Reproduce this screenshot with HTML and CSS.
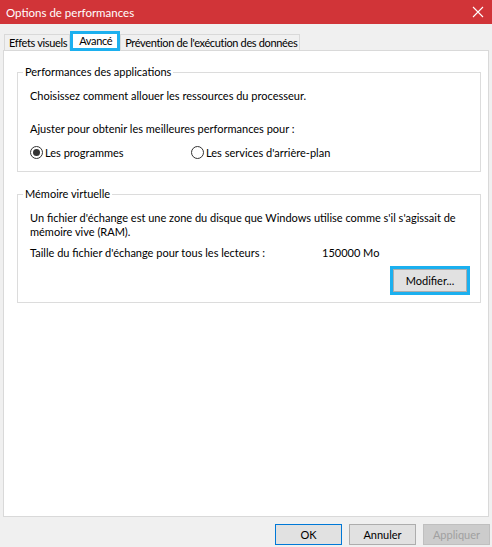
FILE: index.html
```html
<html>
<head>
  <meta name="viewport" content="width=device-width, initial-scale=1">
  <title>Options de performances</title>
  <link rel="stylesheet" href="styles.css">
</head>
<body>
  <div class="window">
    <div class="titlebar">
      <span class="title">Options de performances</span>
      <span class="close">
        <svg width="12" height="12" viewBox="0 0 12 12"><path d="M1 1 L11 11 M11 1 L1 11" stroke="#fff" stroke-width="1.1" fill="none"/></svg>
      </span>
    </div>

    <div class="tabs">
      <div class="tab">Effets visuels</div>
      <div class="tab active highlight">Avancé</div>
      <div class="tab">Prévention de l'exécution des données</div>
    </div>

    <div class="panel">
      <fieldset class="group perf">
        <legend>Performances des applications</legend>
        <p class="line">Choisissez comment allouer les ressources du processeur.</p>
        <p class="line spaced">Ajuster pour obtenir les meilleures performances pour :</p>
        <div class="radios">
          <label class="radio"><span class="dot checked"></span>Les programmes</label>
          <label class="radio"><span class="dot"></span>Les services d'arrière-plan</label>
        </div>
      </fieldset>

      <fieldset class="group mem">
        <legend>Mémoire virtuelle</legend>
        <p class="para">Un fichier d'échange est une zone du disque que Windows utilise comme s'il s'agissait de mémoire vive (RAM).</p>
        <div class="size-row">
          <span class="size-label">Taille du fichier d'échange pour tous les lecteurs :</span>
          <span>150000 Mo</span>
        </div>
        <div class="actions">
          <button class="btn highlight" type="button">Modifier...</button>
        </div>
      </fieldset>
    </div>

    <div class="footer">
      <button class="btn default" type="button">OK</button>
      <button class="btn" type="button">Annuler</button>
      <button class="btn" type="button" disabled>Appliquer</button>
    </div>
  </div>
</body>
</html>
```

FILE: styles.css
```css
body {
  margin: 0;
  background-color: #f0f0f0;
  color: #000;
  font-family: Lato, "Noto Sans", sans-serif;
  font-size: 11px;
}

.window {
  width: 492px;
  height: 547px;
  overflow: hidden;
}

/* barre de titre */
.titlebar {
  height: 24px;
  background-color: #d13438;
  color: #fff;
  display: flex;
  align-items: center;
  justify-content: space-between;
  padding: 0 6px 0 6px;
  font-size: 11.5px;
}

.close {
  display: flex;
  width: 12px;
  height: 12px;
  margin-right: 2px;
}

/* onglets */
.tabs {
  display: flex;
  align-items: flex-end;
  height: 18px;
  margin-top: 8px;
  padding-left: 4px;
  position: relative;
  z-index: 1;
}

.tab {
  height: 15px;
  line-height: 15px;
  padding: 0 2px 0 4px;
  border: 1px solid #d9d9d9;
  border-bottom: none;
  background-color: #f0f0f0;
  white-space: nowrap;
  letter-spacing: -0.35px;
}

.tab.active {
  height: 19px;
  line-height: 17px;
  padding: 0 7px 0 8px;
  margin-bottom: -1px;
  background-color: #fff;
}

.highlight {
  outline: 3px solid #1cb0ef;
  outline-offset: -3px;
}

/* panneau */
.panel {
  margin: 0 3px;
  height: 465px;
  background-color: #fff;
  border: 1px solid #d9d9d9;
  overflow: hidden;
}

.group {
  border: 1px solid #dcdcdc;
  margin: 14px 7px 0 13px;
  padding: 9px 12px 11px 12px;
  min-width: 0;
}

.group legend {
  padding: 0 2px;
  margin-left: -7px;
  line-height: 14px;
}

.group.mem {
  margin-top: 15px;
  padding-top: 10px;
  padding-bottom: 10px;
  padding-right: 13px;
}

.line {
  margin: 0;
  line-height: 15px;
}

.line.spaced {
  margin-top: 18px;
}

.radios {
  display: flex;
  margin-top: 9px;
  height: 15px;
}

.radio {
  display: flex;
  align-items: center;
  line-height: 15px;
}

.radio:first-child {
  width: 161px;
}

.dot {
  width: 11px;
  height: 11px;
  border: 1px solid #333;
  border-radius: 50%;
  margin-right: 2px;
  display: flex;
  align-items: center;
  justify-content: center;
}

.dot.checked::after {
  content: "";
  width: 7px;
  height: 7px;
  border-radius: 50%;
  background-color: #333;
}

.para {
  margin: 0;
  line-height: 14px;
}

.size-row {
  display: flex;
  margin-top: 7px;
  line-height: 14px;
}

.size-label {
  width: 292px;
}

.actions {
  display: flex;
  justify-content: flex-end;
  margin-top: 9px;
}

/* boutons */
.btn {
  font-family: inherit;
  font-size: 11px;
  color: #000;
  background-color: #e1e1e1;
  border: 1px solid #adadad;
  height: 23px;
  padding: 0;
  width: 74px;
}

.btn.highlight {
  outline: 3px solid #1cb0ef;
  outline-offset: 0;
}

.btn.default {
  border-color: #0078d7;
}

.btn:disabled {
  background-color: #cccccc;
  border-color: #bfbfbf;
  color: #a0a0a0;
}

.footer {
  display: flex;
  justify-content: flex-end;
  gap: 7px;
  padding: 7px 2px 0 0;
}

.footer .btn {
  width: 67px;
  height: 21px;
}
```
